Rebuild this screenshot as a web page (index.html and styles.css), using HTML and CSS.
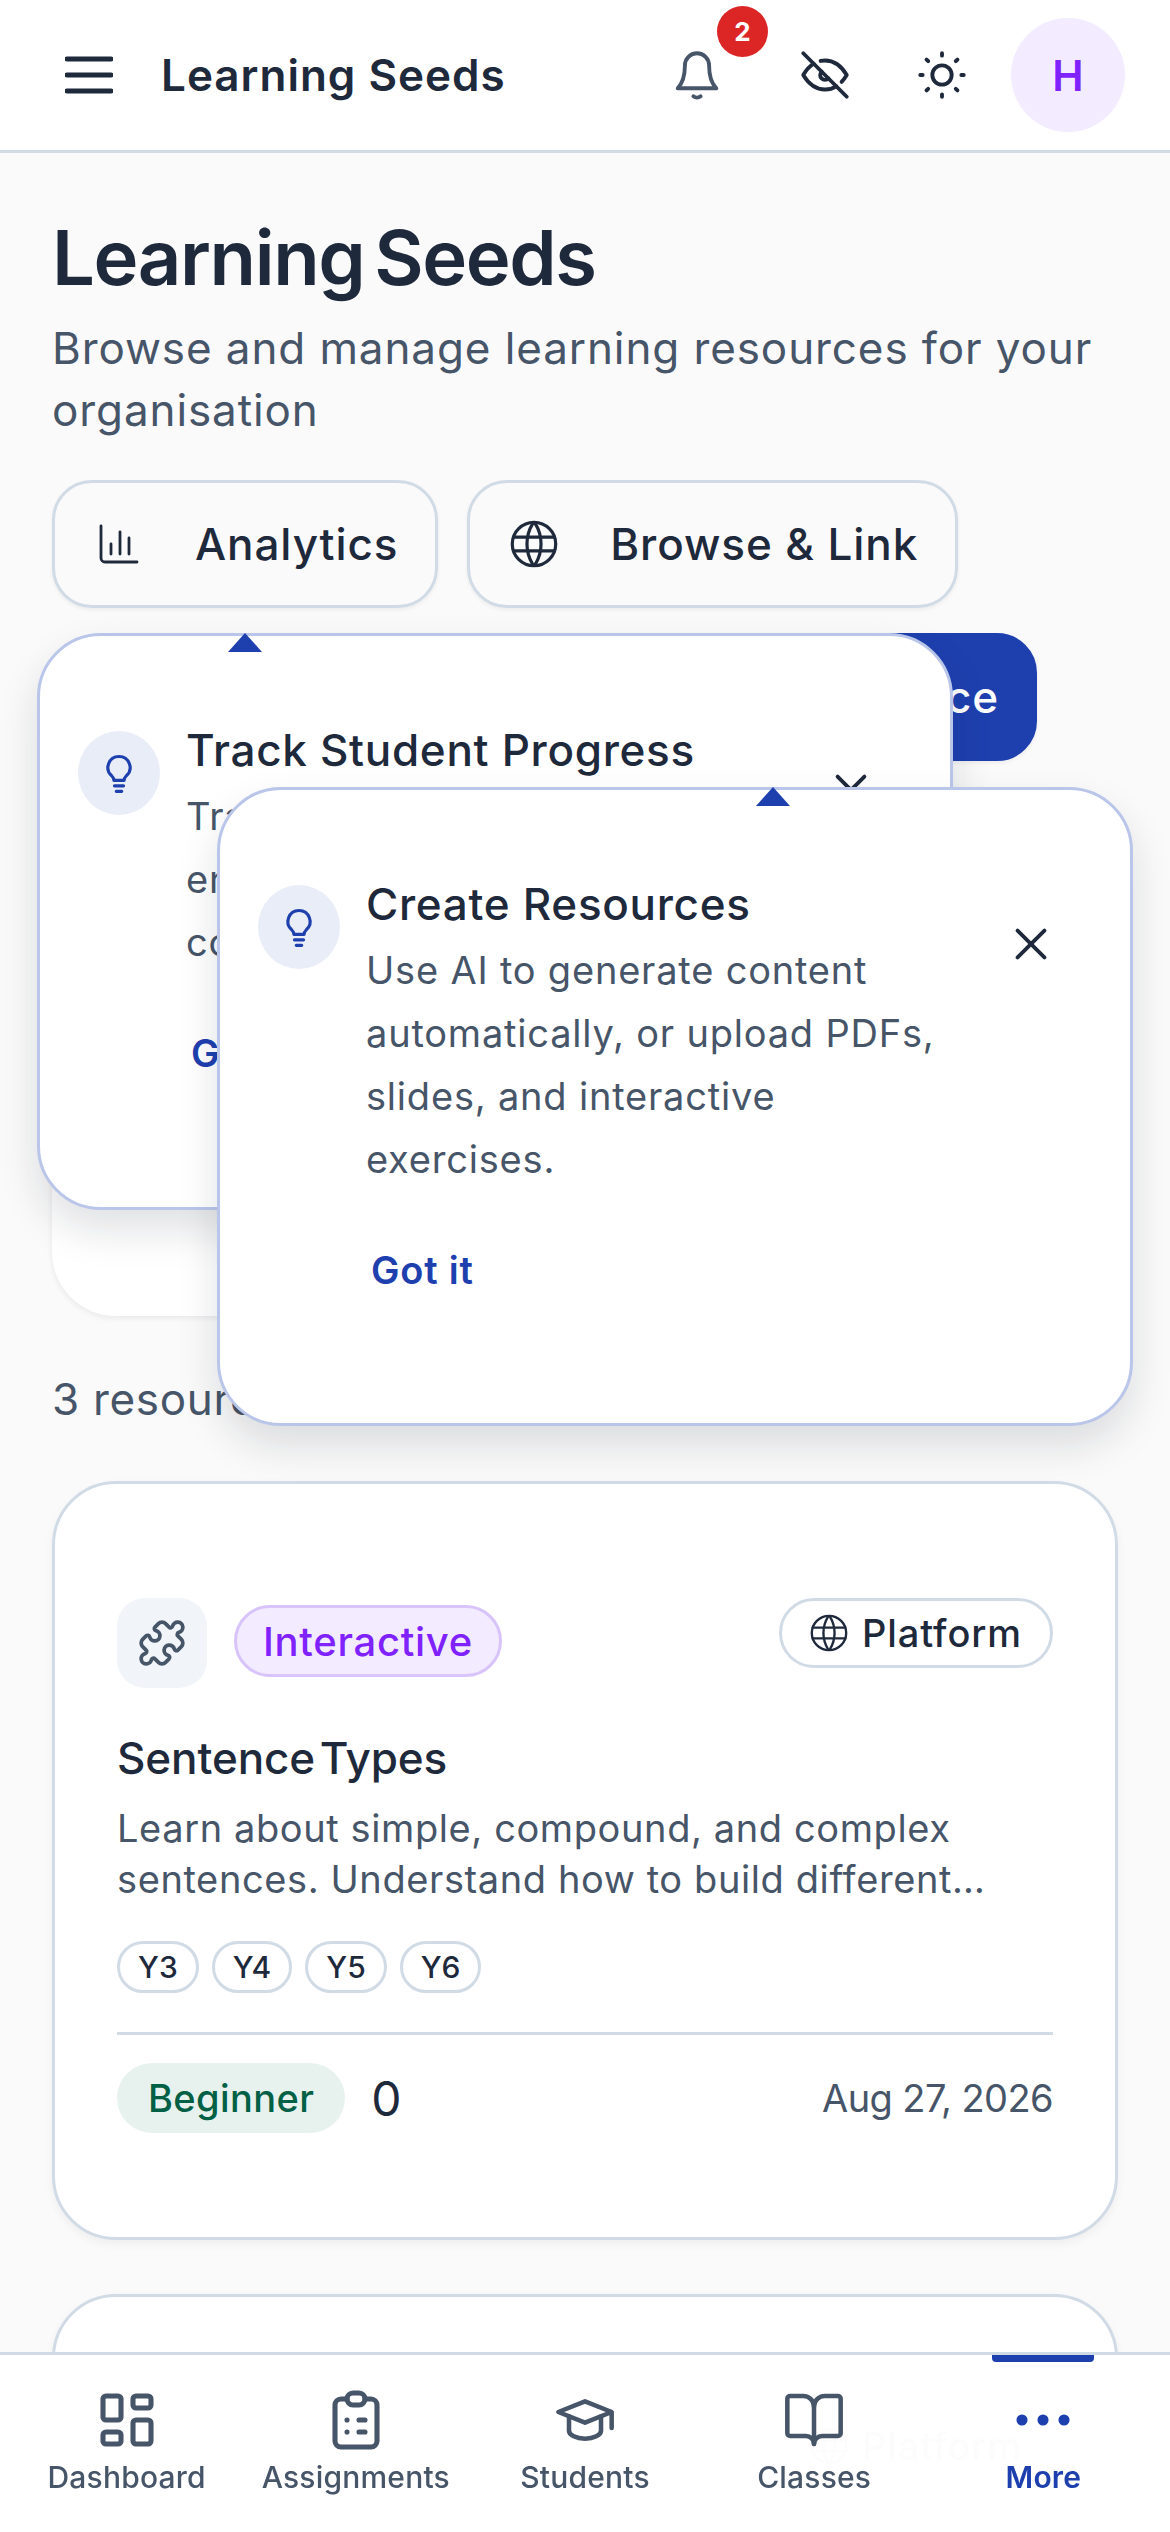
FILE: index.html
```html
<!DOCTYPE html>
<html lang="en">
<head>
  <meta charset="UTF-8">
  <title>Learning Seeds</title>
  <link rel="stylesheet" href="styles.css">
</head>
<body>
  <header class="topbar">
    <svg class="menu-icon" viewBox="0 0 48 38"><path d="M2 3h44M2 19h44M2 35h44"/></svg>
    <span class="topbar-title">Learning Seeds</span>
    <div class="topbar-actions">
      <div class="bell-wrap">
        <svg class="icon bell" viewBox="0 0 24 24"><path d="M12 3a5 5 0 0 1 5 5c0 5 1 7.500 3 9.500H4c2-2 3-4.500 3-9.500a5 5 0 0 1 5-5z"/><path d="M10.500 20.800c.8.7 2.200.7 3 0"/></svg>
        <span class="badge">2</span>
      </div>
      <svg class="icon eye" viewBox="0 0 24 24"><path d="M10.585 10.587a2 2 0 0 0 2.829 2.828"/><path d="M16.681 16.673a8.717 8.717 0 0 1-4.681 1.327c-3.600 0-6.600-2-9-6 1.272-2.120 2.712-3.678 4.320-4.674m2.860-1.146a9.055 9.055 0 0 1 1.820-.18c3.600 0 6.600 2 9 6-.666 1.110-1.379 2.067-2.138 2.870"/><path d="M3 3l18 18"/></svg>
      <svg class="icon sun" viewBox="0 0 24 24"><circle cx="12" cy="12" r="4"/><path d="M3 12h1m8-9v1m8 8h1m-9 8v1m-6.400-15.400l.7.7m12.100-.7l-.7.7m0 11.400l.7.7m-12.100-.7l-.7.7"/></svg>
      <div class="avatar">H</div>
    </div>
  </header>

  <main class="content">
    <h1>Learning Seeds</h1>
    <p class="subtitle">Browse and manage learning resources for your organisation</p>

    <div class="actions">
      <button class="btn">
        <svg class="btn-icon" viewBox="0 0 24 24"><path d="M3 3v16a2 2 0 0 0 2 2h16"/><path d="M8 17v-5M12.500 17V6M17 17V9"/></svg>
        Analytics
      </button>
      <button class="btn">
        <svg class="btn-icon" viewBox="1.500 1.500 21 21"><circle cx="12" cy="12" r="9.500"/><path d="M3 9h18M3 15h18M11.500 3a17 17 0 0 0 0 18M12.500 3a17 17 0 0 1 0 18"/></svg>
        Browse &amp; Link
      </button>
      <button class="btn btn-primary">Create New Resource</button>
    </div>

    <div class="filter-card"></div>

    <p class="count">3 resources</p>

    <article class="card">
      <div class="card-head">
        <span class="type-icon">
          <svg viewBox="0 0 24 24"><path d="M15.390 4.390a1 1 0 0 0 1.680-.474 2.500 2.500 0 1 1 3.014 3.015 1 1 0 0 0-.474 1.680l1.683 1.682a2.414 2.414 0 0 1 0 3.414L19.610 15.390a1 1 0 0 1-1.680-.474 2.500 2.500 0 1 0-3.014 3.015 1 1 0 0 1 .474 1.680l-1.683 1.682a2.414 2.414 0 0 1-3.414 0L8.610 19.610a1 1 0 0 0-1.680.474 2.500 2.500 0 1 1-3.014-3.015 1 1 0 0 0 .474-1.680l-1.683-1.682a2.414 2.414 0 0 1 0-3.414L4.390 8.610a1 1 0 0 1 1.680.474 2.500 2.500 0 1 0 3.014-3.015 1 1 0 0 1-.474-1.680l1.683-1.682a2.414 2.414 0 0 1 3.414 0z"/></svg>
        </span>
        <span class="type-pill">Interactive</span>
        <span class="scope-pill">
          <svg viewBox="1.500 1.500 21 21"><circle cx="12" cy="12" r="9.500"/><path d="M3 9h18M3 15h18M11.500 3a17 17 0 0 0 0 18M12.500 3a17 17 0 0 1 0 18"/></svg>
          Platform
        </span>
      </div>
      <h2 class="card-title">Sentence Types</h2>
      <p class="card-desc">Learn about simple, compound, and complex sentences. Understand how to build different<span class="ellipsis">…</span></p>
      <div class="tags">
        <span class="tag">Y3</span>
        <span class="tag">Y4</span>
        <span class="tag">Y5</span>
        <span class="tag">Y6</span>
      </div>
      <div class="card-foot">
        <span class="level">Beginner</span>
        <span class="uses">0</span>
        <span class="date">Aug 27, 2026</span>
      </div>
    </article>

    <article class="card card-cut">
      <div class="card-head">
        <span class="type-icon"></span>
        <span class="scope-pill">
          <svg viewBox="1.500 1.500 21 21"><circle cx="12" cy="12" r="9.500"/><path d="M3 9h18M3 15h18M11.500 3a17 17 0 0 0 0 18M12.500 3a17 17 0 0 1 0 18"/></svg>
          Platform
        </span>
      </div>
    </article>
  </main>

  <section class="tip tip-progress">
    <span class="tip-arrow"></span>
    <span class="tip-bulb"><svg viewBox="0 0 24 24"><path d="M12 3a6 6 0 0 0-4 10.500c.9.900 1.200 1.700 1.200 2.500h5.600c0-.8.300-1.600 1.200-2.500A6 6 0 0 0 12 3z"/><path d="M9.500 19h5M10.500 22h3"/></svg></span>
    <div class="tip-body">
      <h3>Track Student Progress</h3>
      <p>Track how students are engaging with resources and completing their work.</p>
      <a class="tip-link">Got it</a>
    </div>
    <svg class="tip-close" viewBox="0 0 24 24"><path d="M19 5L5 19M5 5l14 14"/></svg>
  </section>

  <section class="tip tip-create">
    <span class="tip-arrow"></span>
    <span class="tip-bulb"><svg viewBox="0 0 24 24"><path d="M12 3a6 6 0 0 0-4 10.500c.9.900 1.200 1.700 1.200 2.500h5.600c0-.8.300-1.600 1.200-2.500A6 6 0 0 0 12 3z"/><path d="M9.500 19h5M10.500 22h3"/></svg></span>
    <div class="tip-body">
      <h3>Create Resources</h3>
      <p>Use AI to generate content automatically, or upload PDFs, slides, and interactive exercises.</p>
      <a class="tip-link">Got it</a>
    </div>
    <svg class="tip-close" viewBox="0 0 24 24"><path d="M19 5L5 19M5 5l14 14"/></svg>
  </section>

  <nav class="bottom-nav">
    <div class="nav-item">
      <svg viewBox="0 0 24 24"><rect x="4" y="4" width="6" height="8" rx="1"/><rect x="4" y="16" width="6" height="4" rx="1"/><rect x="14" y="12" width="6" height="8" rx="1"/><rect x="14" y="4" width="6" height="4" rx="1"/></svg>
      <span>Dashboard</span>
    </div>
    <div class="nav-item">
      <svg viewBox="0 0 24 24"><path d="M9 5H7a2 2 0 0 0-2 2v12a2 2 0 0 0 2 2h10a2 2 0 0 0 2-2V7a2 2 0 0 0-2-2h-2"/><rect x="9" y="3" width="6" height="4" rx="2"/><path d="M9 12h.01M13 12h2M9 16h.01M13 16h2"/></svg>
      <span>Assignments</span>
    </div>
    <div class="nav-item">
      <svg viewBox="-1.500 -1.500 27 27"><path d="M22 9l-10-4-10 4 10 4 10-4v6"/><path d="M6 10.600V16a6 3 0 0 0 12 0v-5.400"/></svg>
      <span>Students</span>
    </div>
    <div class="nav-item">
      <svg viewBox="-1.500 -1.500 27 27"><path d="M12 7v14"/><path d="M3 18a1 1 0 0 1-1-1V4a1 1 0 0 1 1-1h5a4 4 0 0 1 4 4 4 4 0 0 1 4-4h5a1 1 0 0 1 1 1v13a1 1 0 0 1-1 1h-6a3 3 0 0 0-3 3 3 3 0 0 0-3-3z"/></svg>
      <span>Classes</span>
    </div>
    <div class="nav-item active">
      <svg viewBox="0 0 24 24"><circle cx="5" cy="12" r="1"/><circle cx="12" cy="12" r="1"/><circle cx="19" cy="12" r="1"/></svg>
      <span>More</span>
    </div>
  </nav>
</body>
</html>
```

FILE: styles.css
```css
* { box-sizing: border-box; }
html, body { height: 2532px; overflow: hidden; }
body { margin: 0; background: #fafafa; color: #1e293b; font-family: Inter, "Noto Sans", sans-serif; }
svg { fill: none; stroke: currentColor; stroke-width: 2; stroke-linecap: round; stroke-linejoin: round; }
h1, h2, h3, p { margin: 0; }

.topbar { height: 153px; padding: 0 0 0 65px; display: flex; align-items: center; background: #fff; border-bottom: 3px solid #d1dbe6; }
.menu-icon { width: 48px; height: 38px; stroke-width: 5; }
.topbar-title { margin-left: 48px; font-size: 44px; font-weight: 600; letter-spacing: 1px; }
.topbar-actions { margin-left: auto; margin-right: 45px; display: flex; align-items: center; }
.icon { width: 58px; height: 58px; display: block; stroke-width: 1.6; }
.eye { margin-left: 70px; }
.sun { margin-left: 59px; }
.bell-wrap { position: relative; }
.bell { color: #475569; }
.badge { position: absolute; top: -40px; left: 49px; width: 51px; height: 51px; border-radius: 50%; background: #dc2626; color: #fff; font-size: 26px; font-weight: 700; display: flex; align-items: center; justify-content: center; }
.avatar { margin-left: 40px; width: 114px; height: 114px; border-radius: 50%; background: #f3ebff; color: #7f22fe; font-size: 42px; font-weight: 600; display: flex; align-items: center; justify-content: center; }

.content { padding: 0 52px; }
h1 { margin-top: 59px; font-size: 76px; line-height: 90px; font-weight: 600; letter-spacing: -1.4px; word-spacing: -8px; }
.subtitle { margin-top: 15px; font-size: 44px; line-height: 62px; color: #475569; letter-spacing: 0.9px; }

.actions { margin-top: 39px; display: flex; flex-wrap: wrap; gap: 25px 29px; }
.btn { height: 128px; padding: 0 37px 0 40px; display: flex; align-items: center; gap: 52px; background: #fafafa; color: #1e293b; border: 3px solid #d1dbe6; border-radius: 40px; font-family: inherit; font-size: 44px; font-weight: 500; letter-spacing: 0.9px; box-shadow: 0 2px 4px rgba(15, 23, 42, 0.06); }
.btn-icon { width: 48px; height: 48px; stroke-width: 1.4; flex: none; }
.btn-primary { margin-left: 250px; width: 735px; padding-right: 35px; justify-content: flex-end; background: #1e40af; border-color: #1e40af; color: #fff; }

.filter-card { margin-top: 39px; height: 516px; width: 1066px; background: #fff; border-radius: 64px; box-shadow: 0 2px 6px rgba(15, 23, 42, 0.08); }

.count { margin-top: 52px; font-size: 44px; line-height: 62px; color: #475569; letter-spacing: 0.7px; }

.card { margin-top: 51px; width: 1066px; height: 759px; padding: 114px 62px 0; background: #fff; border: 3px solid #d1dbe6; border-radius: 64px; box-shadow: 0 4px 10px rgba(15, 23, 42, 0.05); }
.card + .card { margin-top: 54px; }
.card-cut { height: 237px; }
.card-head { display: flex; align-items: flex-start; }
.type-icon { width: 90px; height: 90px; border-radius: 28px; background: #f1f5f9; color: #475569; display: flex; align-items: center; justify-content: center; }
.type-icon svg { width: 50px; height: 50px; stroke-width: 1.8; }
.type-pill { margin: 7px 0 0 27px; height: 72px; padding: 0 26px; border: 3px solid #d8c4fb; border-radius: 36px; background: #f3ebff; color: #7f22fe; font-size: 40px; font-weight: 500; letter-spacing: 0.7px; display: flex; align-items: center; }
.scope-pill { margin-left: auto; height: 70px; padding: 0 28px; border: 3px solid #d1dbe6; border-radius: 35px; font-size: 38px; font-weight: 500; letter-spacing: 0.9px; display: flex; align-items: center; gap: 14px; }
.scope-pill svg { width: 38px; height: 38px; stroke-width: 1.3; }
.card-title { margin-top: 42px; font-size: 44px; line-height: 56px; font-weight: 500; letter-spacing: -0.1px; word-spacing: -7px; }
.card-desc { margin-top: 17px; font-size: 38px; line-height: 51px; color: #475569; letter-spacing: 0.6px; }
.ellipsis { letter-spacing: -7px; }
.tags { margin-top: 36px; display: flex; gap: 13px; }
.tag { height: 52px; padding: 0 18px; border: 3px solid #d1dbe6; border-radius: 26px; font-size: 30px; font-weight: 500; display: flex; align-items: center; }
.card-foot { margin-top: 39px; padding-top: 28px; border-top: 3px solid #d1dbe6; display: flex; align-items: center; }
.level { height: 70px; padding: 0 31px; border-radius: 35px; background: #e7f2ee; color: #006045; font-size: 38px; font-weight: 500; letter-spacing: 0.4px; display: flex; align-items: center; }
.uses { margin-left: 26px; font-size: 48px; }
.date { margin-left: auto; font-size: 38px; color: #475569; letter-spacing: -0.6px; }

.tip { position: absolute; width: 916px; padding: 95px 38px 0; display: flex; align-items: flex-start; background: #fff; border: 3px solid #b9c6ea; border-radius: 64px; box-shadow: 0 20px 40px rgba(15, 23, 42, 0.13); }
.tip-progress { left: 37px; top: 633px; height: 577px; }
.tip-create { left: 217px; top: 787px; height: 639px; }
.tip-arrow { position: absolute; top: -3px; width: 0; height: 0; border-left: 17px solid transparent; border-right: 17px solid transparent; border-bottom: 19px solid #1e40af; }
.tip-progress .tip-arrow { left: 188px; }
.tip-create .tip-arrow { left: 536px; }
.tip-bulb { width: 82px; height: 84px; flex: none; border-radius: 50%; background: #e9edf7; color: #1e40af; display: flex; align-items: center; justify-content: center; }
.tip-bulb svg { width: 44px; height: 44px; stroke-width: 1.7; }
.tip-body { margin: -7px 0 0 26px; width: 575px; flex: none; }
.tip h3 { font-size: 44px; line-height: 52px; font-weight: 500; letter-spacing: 0.7px; white-space: nowrap; }
.tip p { margin-top: 9px; font-size: 38px; line-height: 63px; color: #475569; letter-spacing: 0.8px; }
.tip-link { display: block; margin: 56px 0 0 5px; color: #1e40af; font-size: 38px; font-weight: 600; letter-spacing: 0.8px; }
.tip-close { position: absolute; right: 76px; top: 131px; width: 46px; height: 46px; }

.bottom-nav { position: fixed; left: 0; right: 0; bottom: 0; height: 180px; padding: 0 12px; display: grid; grid-template-columns: repeat(5, 1fr); background: rgba(255, 255, 255, 0.99); border-top: 3px solid #d1dbe6; }
.nav-item { position: relative; padding-top: 29px; display: flex; flex-direction: column; align-items: center; color: #475569; font-size: 30px; font-weight: 500; letter-spacing: 0.2px; }
.nav-item svg { width: 72px; height: 72px; stroke-width: 1.7; }
.nav-item span { margin-top: 1px; line-height: 40px; }
.nav-item.active { color: #1e40af; font-weight: 600; }
.nav-item.active::before { content: ""; position: absolute; top: 0; left: 50%; margin-left: -51px; width: 102px; height: 7px; background: #1e40af; border-radius: 0 0 4px 4px; }
.nav-item.active circle { fill: currentColor; }
```
